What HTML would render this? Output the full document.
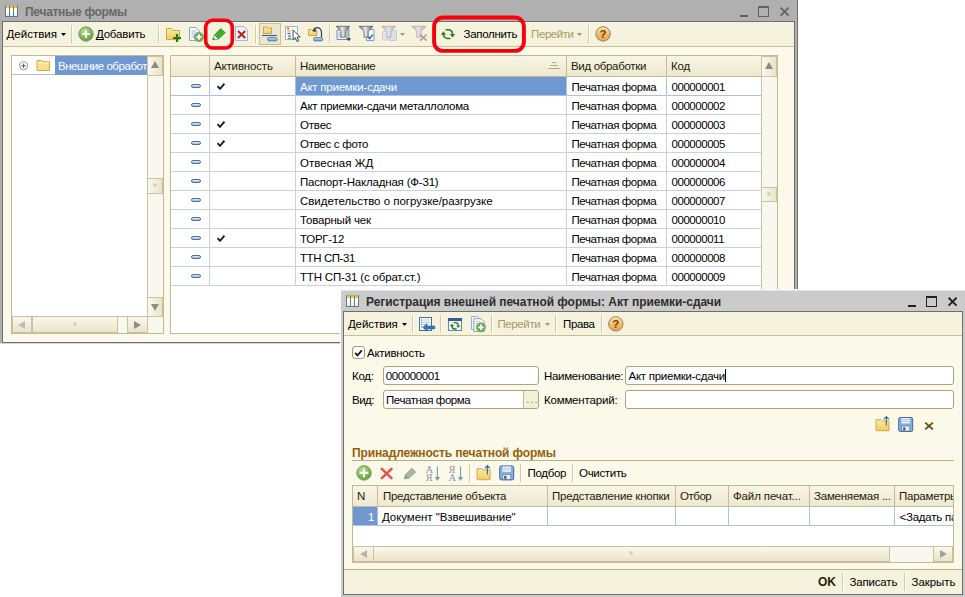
<!DOCTYPE html>
<html lang="ru"><head><meta charset="utf-8"><title>Печатные формы</title>
<style>
html,body{margin:0;padding:0;background:#fff;}
body{width:965px;height:597px;position:relative;overflow:hidden;font-family:"Liberation Sans",sans-serif;font-size:11.5px;line-height:13px;color:#000;}
div,span,i,svg{position:absolute;box-sizing:border-box;white-space:nowrap;}
.t{line-height:13px;}
.b{font-weight:bold;font-size:12px;}
/* windows */
#w1{left:0;top:0;width:798px;height:344px;background:linear-gradient(#b0b0b0,#b0b0b0) 0 0/797px 343px no-repeat,linear-gradient(#6e6e6e,#6e6e6e) 797px 0/1px 343px no-repeat,linear-gradient(#d6d6d6,#d6d6d6) 0 343px/798px 1px no-repeat;}
#w1 .in{left:2px;top:21px;width:793px;height:322px;background:#fbf9ea;border:1px solid #6e6e6e;}
#w1 .tb{left:3px;top:22px;width:791px;height:25px;background:#f5f2dd;border-bottom:1px solid #c8bf97;}
#w2{left:341px;top:290px;width:624px;height:307px;background:#cbcbcb;box-shadow:-1px -1px 0 0 #fff, inset 0 1px 0 0 #e2e2e2;}
#w2 .in{left:2px;top:21px;width:620px;height:284px;background:#fbf9ea;border:1px solid #6e6e6e;}
#w2 .tb{left:3px;top:22px;width:618px;height:24px;background:#f5f2dd;border-bottom:1px solid #c8bf97;}
#w2 .bb{left:3px;top:279px;width:618px;height:25px;background:#f5f2dd;border-top:1px solid #b9af86;}
.sep{width:2px;height:18px;border-left:1px solid #d3cba8;border-right:1px solid #fffef6;}
.dis{color:#ab9a64;}
.arr{width:5px;height:3px;background:#000;clip-path:polygon(0 0,100% 0,50% 100%);}
.arr.dis{background:#a8975a;}
/* panels */
.panel{background:#fff;border:1px solid #c3ba92;}
.hdr{background:linear-gradient(#f8f5e6,#ede8cf);border-bottom:1px solid #c6bc92;}
.hc{top:0;height:20px;border-right:1px solid #c6bc92;padding:4px 0 0 4px;color:#241c08;overflow:hidden;}
.row{left:0;width:590px;height:19px;border-bottom:1px solid #c9d1db;}
.row.cur{border-bottom-color:#a9c1e8;}
.row span{top:0;height:18px;padding:4px 0 0 4px;overflow:hidden;}
.row .c3{left:125px;width:270px;}
.row .c4{left:396px;width:99px;padding-left:4.5px;}
.row .c5{left:496px;width:94px;padding-left:4.5px;}
.row .sel{background:#6f98d2;color:#fff;}
.dash{left:20px;top:7px;width:10px;height:4px;border:1px solid #4f7096;border-radius:2px;background:linear-gradient(#e4edf6,#9dbbdc);}
.chk{left:46px;top:6px;width:8px;height:7px;}
.vl{top:21px;width:1px;background:#c9d1db;}
/* scrollbars */
.sb{background:#f9f8f0;}
.sbtn{background:linear-gradient(90deg,#faf8ec,#e9e4c8);border:1px solid #cbc39d;}
.sbtnh{background:linear-gradient(#faf8ec,#e9e4c8);border:1px solid #cbc39d;}
.tri{width:0;height:0;}
.inp{background:#fff;border:1px solid #aca37a;border-radius:3px;}
u{text-decoration:underline;text-decoration-thickness:1px;text-underline-offset:1px;text-decoration-skip-ink:none;}

</style></head>
<body>
<div id="w1">
 <div class="in"></div>
 <div class="tb"></div>
 <!-- title -->
 <svg style="left:5px;top:5px;width:13px;height:12px" viewBox="0 0 13 12"><rect x="0.5" y="0.5" width="12" height="11" fill="#fff" stroke="#647789"/><rect x="1" y="1" width="11" height="2" fill="#f5c51c"/><rect x="1" y="8" width="11" height="3" fill="#e6f3fb"/><path d="M4.5 1V11M8.5 1V11" stroke="#647789"/><path d="M0.5 0.5H12.5" stroke="#97abc2"/></svg>
 <span class="t b" id="t1" style="left:25px;top:6px;color:#676767;letter-spacing:-0.28px">Печатные формы</span>
 <svg style="left:736px;top:2px;width:58px;height:18px" viewBox="736 2 58 18"><rect x="740" y="15" width="8" height="2" fill="#626262"/><rect x="758" y="6" width="11" height="2" fill="#626262"/><rect x="758.5" y="7.5" width="10" height="9" fill="none" stroke="#626262"/><path d="M780.6 7.6L788.6 15.6M788.6 7.6L780.6 15.6" stroke="#626262" stroke-width="1.7"/></svg>
 <!-- toolbar -->
 <span class="t" id="t2" style="left:6.5px;top:28px;letter-spacing:0.014px">Действия</span><i class="arr" style="left:61px;top:33px"></i>
 <i class="sep" style="left:71px;top:25px"></i>
 <svg style="left:78px;top:26px;width:16px;height:16px" viewBox="0 0 16 16"><defs><radialGradient id="gp" cx="0.4" cy="0.3" r="0.8"><stop offset="0" stop-color="#b8e08c"/><stop offset="1" stop-color="#4f9b2a"/></radialGradient></defs><circle cx="8" cy="8" r="7.2" fill="url(#gp)" stroke="#86937c" stroke-width="1"/><path d="M8 4V12M4 8H12" stroke="#fff" stroke-width="2"/></svg>
 <span class="t" id="t3" style="left:95.9px;top:28px;letter-spacing:-0.179px"><u>Д</u>обавить</span>
 <i class="sep" style="left:158px;top:25px"></i>
 <!-- toolbar icons (page coordinates) -->
 <i class="sep" style="left:255px;top:25px"></i>
 <div style="left:259px;top:23px;width:22px;height:22px;border:1px solid #c9bf95;background:#ece7cc"></div>
 <i class="sep" style="left:329px;top:25px"></i>
 <i class="arr dis" style="left:400px;top:33px"></i>
 <svg style="left:0;top:0;width:798px;height:60px" viewBox="0 0 798 60">
  <defs>
   <linearGradient id="fold" x1="0" y1="0" x2="0" y2="1"><stop offset="0" stop-color="#fbe9a6"/><stop offset="1" stop-color="#f1cd62"/></linearGradient>
   <linearGradient id="fun" x1="0" y1="0" x2="1" y2="0"><stop offset="0" stop-color="#6a6e72"/><stop offset="0.45" stop-color="#e8eaec"/><stop offset="1" stop-color="#5a5e62"/></linearGradient>
   <linearGradient id="fund" x1="0" y1="0" x2="1" y2="0"><stop offset="0" stop-color="#b4b4b4"/><stop offset="0.45" stop-color="#e4e4e4"/><stop offset="1" stop-color="#aeaeae"/></linearGradient>
   <linearGradient id="pill" x1="0" y1="0" x2="0" y2="1"><stop offset="0" stop-color="#c9dcef"/><stop offset="1" stop-color="#6f97c4"/></linearGradient>
  </defs>
  <!-- folder plus 166..181 x 27..42 -->
  <path d="M166.5 28.5H171.5L173 30.5H179.5V39.5H166.5Z" fill="url(#fold)" stroke="#cfa646"/>
  <path d="M177 34V42M173 38H181" stroke="#1f7d12" stroke-width="2.2"/>
  <!-- doc plus 189..204 -->
  <path d="M189.5 27.5H196L199.5 31V40.5H189.5Z" fill="#f3f7fb" stroke="#8ea6c0"/>
  <path d="M191.5 31H196M191.5 33H197.5M191.5 35H195M191.5 37H194" stroke="#a8bcd2" stroke-width="0.9"/>
  <circle cx="199" cy="37" r="4.6" fill="#6cb04a" stroke="#8aa382" stroke-width="1"/>
  <path d="M199 34.2V39.8M196.2 37H201.8" stroke="#fff" stroke-width="1.7"/>
  <!-- pencil 212..225 x 28..40 -->
  <path d="M212.8 39.8L214.3 35.3L220.8 28.6L225.2 32.8L218.2 39.2Z" fill="#35a31f" stroke="#2a8417" stroke-width="0.7"/>
  <path d="M215.8 36.2L221.8 30.2M217.6 38L224 31.8" stroke="#6fca58" stroke-width="0.8"/>
  <path d="M212.8 39.8L214.3 35.3L218.2 39.2Z" fill="#eef6ea"/>
  <path d="M212.8 39.8L213.5 37.7L215 39.2Z" fill="#2a2a2a"/>
  <!-- doc x 235..248 x 26..41 -->
  <path d="M235.5 26.5H244L247.5 30V40.5H235.5Z" fill="#e9f1fa" stroke="#a3b9d2"/>
  <path d="M238 31L245.2 38M245.2 31L238 38" stroke="#b52420" stroke-width="2"/>
  <!-- hierarchy (pressed) -->
  <path d="M263.5 27H266.5L267.5 28H271.5V33.5H263.5Z" fill="url(#fold)" stroke="#cfa646"/>
  <path d="M262 35.5H277" stroke="#2f5f98" stroke-width="1.1"/>
  <rect x="267.5" y="37.5" width="9.5" height="3.4" rx="1.5" fill="url(#pill)" stroke="#4f7db2" stroke-width="0.9"/>
  <!-- list + cursor 285..300 -->
  <rect x="285.5" y="26.5" width="12" height="13" fill="#fbfdff" stroke="#9db2ca"/>
  <path d="M287 28.5H289" stroke="#e03020" stroke-width="1.4"/><path d="M287.5 31H290.5" stroke="#e8b020" stroke-width="1.4"/><path d="M287.5 33.5H290.5" stroke="#a05a20" stroke-width="1.4"/><path d="M288 36H291" stroke="#30a0d8" stroke-width="1.4"/><path d="M288 38.3H291" stroke="#40a030" stroke-width="1.2"/>
  <path d="M293 29.8V39.6L295.3 37.6L297 41.6L298.8 40.8L297.1 37H300.2Z" fill="#fff" stroke="#3a3a3a" stroke-width="0.9"/>
  <!-- folder arc 308..323 -->
  <path d="M308.5 29.5H311.5L312.5 30.5H317V35.5H308.5Z" fill="url(#fold)" stroke="#cfa646"/>
  <path d="M313.5 29.6C316 26.5 321.5 27 321.5 33V37.5" fill="none" stroke="#2c4058" stroke-width="1.2"/>
  <path d="M311.8 30.8L315.8 28.2L315.6 32.2Z" fill="#2c4058"/>
  <rect x="313.5" y="37.5" width="9.2" height="3.4" rx="1.5" fill="url(#pill)" stroke="#4f7db2" stroke-width="0.9"/>
  <!-- filter 1 336..350 -->
  <path d="M337 30H347V39.5H337Z" fill="#f1f6fb" stroke="#5f84b0" stroke-width="0.9"/>
  <path d="M338.5 33H341M338.5 35H341M338.5 37H341" stroke="#7f9fc4" stroke-width="0.8"/>
  <path d="M336.3 26.3H349.7L345.4 31.4V37.2H341V31.4Z" fill="url(#fun)" stroke="#50565c" stroke-width="0.7"/>
  <path d="M348.8 28.5V40" stroke="#26384e" stroke-width="1" stroke-dasharray="1.2 0.8"/>
  <path d="M346.5 38.3H351L348.8 41.3Z" fill="#26384e"/>
  <!-- filter 2 359..374 -->
  <path d="M366.5 29.5H374V40.5H366.5Z" fill="#f1f6fb" stroke="#6c97c8" stroke-width="0.9"/>
  <path d="M359 26.3H373L368.2 31.4V37.2H364V31.4Z" fill="url(#fun)" stroke="#50565c" stroke-width="0.7"/>
  <path d="M367.8 36.6L369.6 38.6L372.8 34.6" fill="none" stroke="#2a62b4" stroke-width="1.5"/>
  <!-- filter 3 disabled 382..396 -->
  <path d="M382.5 31.5H388V40H382.5Z" fill="#e3e6e6" stroke="#c4c8c8" stroke-width="0.8"/>
  <path d="M389.5 30.5H396.5V40.5H389.5Z" fill="#d9e0e6" stroke="#b9c4cf" stroke-width="0.8"/>
  <path d="M381.8 26.3H395.8L391 31.4V37.2H386.6V31.4Z" fill="url(#fund)" stroke="#a9a9a9" stroke-width="0.7"/>
  <!-- filter 4 disabled 412..427 -->
  <path d="M411.9 26.3H425.9L421 31.4V37.2H416.8V31.4Z" fill="url(#fund)" stroke="#a9a9a9" stroke-width="0.7"/>
  <path d="M420.2 34.5L426.6 40.6M426.6 34.5L420.2 40.6" stroke="#b59c9c" stroke-width="1.7"/>
 </svg>
 <svg style="left:203px;top:17px;width:32px;height:34px" viewBox="0 0 32 34"><rect x="2.7" y="3.2" width="26.6" height="27.8" rx="7" fill="none" stroke="#f4000e" stroke-width="3.6"/></svg>
 <!-- fill -->
 <svg style="left:436px;top:24px;width:24px;height:20px" viewBox="436 24 24 20"><path d="M445.6 29.7H448.3A4.1 4.1 0 0 1 452.5 33.8V34.5" fill="none" stroke="#2a7c14" stroke-width="1.5"/><path d="M449.9 34.1H455.1L452.5 37.5Z" fill="#2a7c14"/><path d="M450.4 38.4H447.6A4.1 4.1 0 0 1 443.4 34.3V34" fill="none" stroke="#2a7c14" stroke-width="1.5"/><path d="M440.9 34.7H446L443.4 31.2Z" fill="#2a7c14"/></svg>
 <span class="t" id="t4" style="left:463.5px;top:28px;letter-spacing:-0.297px">Заполнить</span>
 <svg style="left:431px;top:14px;width:96px;height:40px" viewBox="0 0 96 40"><rect x="3.1" y="3.5" width="89.8" height="33.4" rx="9" fill="none" stroke="#f8000a" stroke-width="3.9"/></svg>
 <span class="t dis" id="t5" style="left:531.1px;top:28px;letter-spacing:-0.44px">Перейти</span><i class="arr dis" style="left:577px;top:33px"></i>
 <i class="sep" style="left:588px;top:25px"></i>
 <svg style="left:595px;top:26px;width:17px;height:17px" viewBox="0 0 17 17"><defs><linearGradient id="gh" x1="0" y1="0" x2="0" y2="1"><stop offset="0" stop-color="#fde4a8"/><stop offset="0.55" stop-color="#f3bb62"/><stop offset="1" stop-color="#e9a545"/></linearGradient></defs><circle cx="8.1" cy="7.9" r="7.2" fill="url(#gh)" stroke="#8d8370" stroke-width="1"/><text x="8.1" y="12" font-family="Liberation Sans,sans-serif" font-weight="bold" font-size="11.5" text-anchor="middle" fill="#6e4410">?</text></svg>

 <!-- tree panel -->
 <div class="panel" style="left:11px;top:55px;width:153px;height:279px">
   <svg style="left:7px;top:5px;width:10px;height:10px" viewBox="0 0 10 10"><circle cx="4.6" cy="4.8" r="4" fill="#fff" stroke="#7c7c7c" stroke-width="0.8"/><path d="M2.4 4.8H6.8M4.6 2.6V7" stroke="#444" stroke-width="0.9"/></svg>
   <i style="left:0;top:18px;width:43px;height:1px;background:#a9c1e8"></i>
   <svg style="left:24px;top:3px;width:15px;height:13px" viewBox="0 0 15 13"><path d="M1 1.5H5.5L6.5 2.7H13.5V11.5H1Z" fill="#f8de8e" stroke="#d0a848"/><path d="M1.8 4H13" stroke="#fff3c4"/></svg>
   <div style="left:43px;top:0;width:92px;height:19px;background:#6f98d2;overflow:hidden"><span class="t" id="t6" style="left:3px;top:4px;color:#fff;letter-spacing:-0.45px">Внешние обработки</span></div>
   <!-- v scroll -->
   <div class="sb" style="left:135px;top:0;width:16px;height:261px;border-left:1px solid #cbc39d"></div>
   <div class="sbtn" style="left:135px;top:0;width:16px;height:20px"></div>
   <i class="tri" style="left:139px;top:5px;border-left:4px solid transparent;border-right:4px solid transparent;border-bottom:7px solid #8a8a8a"></i>
   <div class="sbtn" style="left:135px;top:122px;width:16px;height:16px"></div><i style="left:141px;top:127px;width:4px;height:4px;border-radius:2px;background:#d9d4bd"></i>
   <div class="sbtn" style="left:135px;top:241px;width:16px;height:20px"></div>
   <i class="tri" style="left:139px;top:248px;border-left:4px solid transparent;border-right:4px solid transparent;border-top:7px solid #8c8c8c"></i>
   <!-- h scroll -->
   <div class="sb" style="left:0;top:260px;width:151px;height:17px;border-top:1px solid #cbc39d"></div>
   <div class="sbtnh" style="left:0;top:260px;width:20px;height:17px"></div>
   <i class="tri" style="left:6px;top:265px;border-top:4px solid transparent;border-bottom:4px solid transparent;border-right:7px solid #bdbdb8"></i>
   <div class="sbtnh" style="left:20px;top:260px;width:86px;height:17px"></div><i style="left:61px;top:266px;width:4px;height:4px;border-radius:2px;background:#d9d4bd"></i>
   <div class="sbtnh" style="left:115px;top:260px;width:21px;height:17px"></div>
   <i class="tri" style="left:122px;top:265px;border-top:4px solid transparent;border-bottom:4px solid transparent;border-left:7px solid #8c8c8c"></i>
 </div>

 <!-- table panel -->
 <div class="panel" style="left:170px;top:55px;width:608px;height:279px;overflow:hidden">
   <div class="hdr" style="left:0;top:0;width:590px;height:21px">
     <span class="hc" style="left:0;width:39px"></span>
     <span class="hc" id="h1" style="left:39px;width:86px;letter-spacing:-0.159px">Активность</span>
     <span class="hc" id="h2" style="left:125px;width:271px;letter-spacing:-0.361px">Наименование</span>
     <span class="hc" id="h3" style="left:396px;width:100px;letter-spacing:-0.326px">Вид обработки</span>
     <span class="hc" id="h4" style="left:496px;width:94px;border-right:0;letter-spacing:-0.154px">Код</span>
     <svg style="left:377px;top:5px;width:12px;height:9px" viewBox="0 0 12 9"><path d="M4 1.5H8M2 4.5H10M0 7.5H12" stroke="#b9ad7a" stroke-width="1.2"/></svg>
   </div>
   <div style="left:0;top:0;width:607px;height:277px">
   <div class="row cur" style="top:21px"><i class="dash"></i><svg class="chk" viewBox="0 0 8 7"><path d="M0.6 3.2 L3 5.8 L7.4 0.7" fill="none" stroke="#1c1c1c" stroke-width="1.8"/></svg><span class="c3 sel" id="r0" style="letter-spacing:-0.233px">Акт приемки-сдачи</span><span class="c4" style="letter-spacing:-0.4px">Печатная форма</span><span class="c5" style="letter-spacing:-0.451px">000000001</span></div>
<div class="row" style="top:40px"><i class="dash"></i><span class="c3" id="r1" style="letter-spacing:-0.27px">Акт приемки-сдачи металлолома</span><span class="c4" style="letter-spacing:-0.4px">Печатная форма</span><span class="c5" style="letter-spacing:-0.451px">000000002</span></div>
<div class="row" style="top:59px"><i class="dash"></i><svg class="chk" viewBox="0 0 8 7"><path d="M0.6 3.2 L3 5.8 L7.4 0.7" fill="none" stroke="#1c1c1c" stroke-width="1.8"/></svg><span class="c3" id="r2" style="letter-spacing:-0.189px">Отвес</span><span class="c4" style="letter-spacing:-0.4px">Печатная форма</span><span class="c5" style="letter-spacing:-0.451px">000000003</span></div>
<div class="row" style="top:78px"><i class="dash"></i><svg class="chk" viewBox="0 0 8 7"><path d="M0.6 3.2 L3 5.8 L7.4 0.7" fill="none" stroke="#1c1c1c" stroke-width="1.8"/></svg><span class="c3" id="r3" style="letter-spacing:-0.285px">Отвес с фото</span><span class="c4" style="letter-spacing:-0.4px">Печатная форма</span><span class="c5" style="letter-spacing:-0.451px">000000005</span></div>
<div class="row" style="top:97px"><i class="dash"></i><span class="c3" id="r4" style="letter-spacing:0.025px">Отвесная ЖД</span><span class="c4" style="letter-spacing:-0.4px">Печатная форма</span><span class="c5" style="letter-spacing:-0.451px">000000004</span></div>
<div class="row" style="top:116px"><i class="dash"></i><span class="c3" id="r5" style="letter-spacing:-0.194px">Паспорт-Накладная (Ф-31)</span><span class="c4" style="letter-spacing:-0.4px">Печатная форма</span><span class="c5" style="letter-spacing:-0.451px">000000006</span></div>
<div class="row" style="top:135px"><i class="dash"></i><span class="c3" id="r6" style="letter-spacing:-0.025px">Свидетельство о погрузке/разгрузке</span><span class="c4" style="letter-spacing:-0.4px">Печатная форма</span><span class="c5" style="letter-spacing:-0.451px">000000007</span></div>
<div class="row" style="top:154px"><i class="dash"></i><span class="c3" id="r7" style="letter-spacing:-0.179px">Товарный чек</span><span class="c4" style="letter-spacing:-0.4px">Печатная форма</span><span class="c5" style="letter-spacing:-0.451px">000000010</span></div>
<div class="row" style="top:173px"><i class="dash"></i><svg class="chk" viewBox="0 0 8 7"><path d="M0.6 3.2 L3 5.8 L7.4 0.7" fill="none" stroke="#1c1c1c" stroke-width="1.8"/></svg><span class="c3" id="r8" style="letter-spacing:-0.283px">ТОРГ-12</span><span class="c4" style="letter-spacing:-0.4px">Печатная форма</span><span class="c5" style="letter-spacing:-0.451px">000000011</span></div>
<div class="row" style="top:192px"><i class="dash"></i><span class="c3" id="r9" style="letter-spacing:-0.417px">ТТН СП-31</span><span class="c4" style="letter-spacing:-0.4px">Печатная форма</span><span class="c5" style="letter-spacing:-0.451px">000000008</span></div>
<div class="row" style="top:211px"><i class="dash"></i><span class="c3" id="r10" style="letter-spacing:-0.169px">ТТН СП-31 (с обрат.ст.)</span><span class="c4" style="letter-spacing:-0.4px">Печатная форма</span><span class="c5" style="letter-spacing:-0.451px">000000009</span></div>
   </div>
   <i class="vl" style="left:38px;height:209px"></i><i class="vl" style="left:124px;height:209px"></i><i class="vl" style="left:395px;height:209px"></i><i class="vl" style="left:495px;height:209px"></i><i class="vl" style="left:38px;height:18px;background:#a9c1e8"></i><i class="vl" style="left:124px;height:18px;background:#a9c1e8"></i><i class="vl" style="left:395px;height:18px;background:#a9c1e8"></i><i class="vl" style="left:495px;height:18px;background:#a9c1e8"></i>
   <!-- v scroll -->
   <div class="sb" style="left:590px;top:0;width:16px;height:277px;border-left:1px solid #cbc39d"></div>
   <div class="sbtn" style="left:590px;top:0;width:16px;height:21px"></div>
   <i class="tri" style="left:594px;top:6px;border-left:4px solid transparent;border-right:4px solid transparent;border-bottom:7px solid #8a8a8a"></i>
   <div class="sbtn" style="left:590px;top:131px;width:16px;height:15px"></div><i style="left:596px;top:136px;width:4px;height:4px;border-radius:2px;background:#d9d4bd"></i>
 </div>
</div>

<div id="w2">
 <div class="in"></div>
 <div class="tb"></div>
 <div class="bb"></div>
</div>
<!-- window 2 content in page coordinates -->
<svg style="left:346px;top:295px;width:13px;height:12px" viewBox="0 0 13 12"><rect x="0.5" y="0.5" width="12" height="11" fill="#fff" stroke="#647789"/><rect x="1" y="1" width="11" height="2" fill="#f5c51c"/><rect x="1" y="8" width="11" height="3" fill="#e6f3fb"/><path d="M4.5 1V11M8.5 1V11" stroke="#647789"/><path d="M0.5 0.5H12.5" stroke="#97abc2"/></svg>
<span class="t b" id="u1" style="left:366px;top:296px;letter-spacing:-0.05px;color:#2e2e2e">Регистрация внешней печатной формы: Акт приемки-сдачи</span>
<svg style="left:904px;top:292px;width:58px;height:18px" viewBox="904 292 58 18"><rect x="908" y="305" width="8" height="2" fill="#222"/><rect x="926" y="296" width="11" height="2" fill="#222"/><rect x="926.5" y="297.5" width="10" height="9" fill="none" stroke="#222"/><path d="M948.6 297.8L956.6 305.6M956.6 297.8L948.6 305.6" stroke="#222" stroke-width="1.9"/></svg>
<!-- toolbar -->
<span class="t" id="u2" style="left:347.9px;top:318px;letter-spacing:-0.061px">Действия</span><i class="arr" style="left:402px;top:323px"></i>
<i class="sep" style="left:412px;top:315px"></i>
<i class="sep" style="left:440px;top:315px"></i>
<i class="sep" style="left:491px;top:315px"></i>
<span class="t dis" id="u3" style="left:497.5px;top:318px;letter-spacing:-0.397px">Перейти</span><i class="arr dis" style="left:545px;top:323px"></i>
<i class="sep" style="left:555px;top:315px"></i>
<span class="t" id="u4" style="left:563.0px;top:318px;letter-spacing:-0.367px">Права</span>
<i class="sep" style="left:601px;top:315px"></i>
<svg style="left:608px;top:316px;width:17px;height:17px" viewBox="0 0 17 17"><circle cx="7.8" cy="7.9" r="7.2" fill="url(#gh)" stroke="#8d8370" stroke-width="1"/><text x="7.8" y="12" font-family="Liberation Sans,sans-serif" font-weight="bold" font-size="11.5" text-anchor="middle" fill="#6e4410">?</text></svg>
<svg style="left:341px;top:312px;width:300px;height:24px" viewBox="341 312 300 24">
 <!-- icon1 doc + arrow -->
 <rect x="419.5" y="317.5" width="12" height="13" fill="#f6f9fd" stroke="#4a6f9f"/>
 <path d="M421 320H422.5M421 322.3H422.5M421 324.6H422.5M421 326.9H422.5" stroke="#3f74b8" stroke-width="1"/>
 <path d="M423.5 320H430M423.5 322.3H430M423.5 324.6H428" stroke="#b5c4d6" stroke-width="0.9"/>
 <path d="M434.8 325.9H427V323.6L422.8 327.4L427 331.2V328.9H434.8Z" fill="#2f78b8" stroke="#25609a" stroke-width="0.5"/>
 <!-- icon2 window refresh -->
 <rect x="448.5" y="318.5" width="13" height="12" fill="#f4f8fc" stroke="#5f86b6"/>
 <rect x="448.5" y="318.5" width="13" height="2" fill="#2f5f98" stroke="#2f5f98"/>
 <path d="M453.6 322.6H455.4A2.8 2.8 0 0 1 458.2 325.4V325.6" fill="none" stroke="#2a7c14" stroke-width="1.3"/><path d="M456.2 325.4H460.3L458.2 328Z" fill="#2a7c14"/>
 <path d="M456.6 329H454.8A2.8 2.8 0 0 1 452 326.2V326" fill="none" stroke="#2a7c14" stroke-width="1.3"/><path d="M449.9 326.2H454L452 323.6Z" fill="#2a7c14"/>
 <!-- icon3 docs plus -->
 <path d="M471.5 316.5H477.5L480 319V329.5H471.5Z" fill="#f1f5fa" stroke="#9fb2c8"/>
 <path d="M473.8 318.7H481L484.3 322V331.5H473.8Z" fill="#f6f9fc" stroke="#8ea6c0"/>
 <path d="M475.5 321.5H480M475.5 323.5H479" stroke="#b5c4d6" stroke-width="0.8"/>
 <circle cx="480.9" cy="327.3" r="4.5" fill="#6cb04a" stroke="#8aa382" stroke-width="1"/>
 <path d="M480.9 324.5V330.1M478.1 327.3H483.7" stroke="#fff" stroke-width="1.7"/>
</svg>
<!-- form -->
<div style="left:352px;top:346px;width:13px;height:13px;background:#fff;border:1px solid #a0976c;border-radius:3px"></div>
<svg style="left:354px;top:349px;width:9px;height:8px" viewBox="0 0 9 8"><path d="M1.2 3.8 L3.5 6.3 L7.8 1.3" fill="none" stroke="#1a1a1a" stroke-width="1.8"/></svg>
<span class="t" id="u5" style="left:367.0px;top:347px;letter-spacing:-0.269px">Активность</span>
<span class="t" id="u6" style="left:352.0px;top:370px;letter-spacing:-0.263px">Код:</span>
<div class="inp" style="left:383px;top:366px;width:156px;height:19px"></div>
<span class="t" id="u7" style="left:385.8px;top:370px;letter-spacing:-0.407px">000000001</span>
<span class="t" id="u8" style="left:543.9px;top:370px;letter-spacing:-0.279px">Наименование:</span>
<div class="inp" style="left:625px;top:366px;width:329px;height:19px"></div>
<span class="t" id="u9" style="left:628.5px;top:370px;letter-spacing:-0.262px">Акт приемки-сдачи</span><i style="left:725px;top:369px;width:1px;height:13px;background:#000"></i>
<span class="t" id="u10" style="left:352.0px;top:394px;letter-spacing:-0.5px">Вид:</span>
<div class="inp" style="left:383px;top:390px;width:156px;height:19px"></div>
<div style="left:523px;top:391px;width:15px;height:17px;background:#f3f0da;border-left:1px solid #c2b98e;border-radius:0 2px 2px 0"></div>
<span class="t" style="left:526px;top:393px;color:#8f875e;letter-spacing:1px">...</span>
<span class="t" id="u11" style="left:386.0px;top:394px;letter-spacing:-0.443px">Печатная форма</span>
<span class="t" id="u12" style="left:543.9px;top:394px;letter-spacing:-0.17px">Комментарий:</span>
<div class="inp" style="left:625px;top:390px;width:329px;height:19px"></div>
<!-- small icons -->
<svg style="left:870px;top:412px;width:70px;height:24px" viewBox="870 412 70 24">
<g transform="translate(874.5 416)"><path d="M1.5 3.7H6.3L7.8 5.2H14.5V14.7H1.5Z" fill="url(#fold)" stroke="#d3a94a"/><path d="M11.8 9.5V1" stroke="#34688c" stroke-width="1.1"/><path d="M9.3 3.4L11.8 0.6L14.3 3.4" fill="none" stroke="#34688c" stroke-width="1.1"/></g>
<g transform="translate(898.2 417)"><rect x="0.5" y="0.5" width="14" height="14" rx="1.6" fill="#8aadd8" stroke="#46699c"/><rect x="3.3" y="1" width="8.4" height="5.4" fill="#eef4fb"/><path d="M3.3 2.6H11.7M3.3 4.4H11.7" stroke="#a9c6e6" stroke-width="0.9"/><rect x="3.6" y="9" width="8" height="5" fill="#eeeeee" stroke="#426fa6" stroke-width="0.6"/><rect x="5" y="10.4" width="2.2" height="3" fill="#38507a"/></g>
<path d="M925.2 422.6L932.8 429.4M932.8 422.6L925.2 429.4" stroke="#6a4d00" stroke-width="1.9"/>
</svg>
<!-- section -->
<span class="t b" id="u13" style="left:352px;top:447px;color:#95600a;letter-spacing:-0.12px">Принадлежность печатной формы</span>
<i style="left:352px;top:460px;width:602px;height:1px;background:#b9af86"></i>
<!-- section toolbar -->
<svg style="left:352px;top:462px;width:180px;height:22px" viewBox="352 462 180 22">
 <circle cx="364" cy="472.9" r="7.3" fill="url(#gp)" stroke="#8a9c80" stroke-width="1"/>
 <path d="M364 468.6V477.2M359.7 472.9H368.3" stroke="#fff" stroke-width="2.1"/>
 <path d="M381.8 468.8L391.5 478.2M391.5 468.8L381.8 478.2" stroke="#e3514a" stroke-width="2.5" stroke-linecap="round"/>
 <path d="M404.1 478.9L405.4 474.6L411.6 468L415.9 472.1L409.2 478.3Z" fill="#a9b59f" stroke="#9aa890" stroke-width="0.6"/>
 <path d="M404.1 478.9L405.4 474.6L409.2 478.3Z" fill="#93a58c"/>
 <text x="425.6" y="472.7" font-family="Liberation Serif,serif" font-size="10.5" fill="#7b98b8">A</text>
 <text x="425.8" y="480.8" font-family="Liberation Serif,serif" font-size="10" fill="#a08898">Я</text>
 <path d="M437.4 466.5V479.5" stroke="#7b98b8" stroke-width="1.1"/><path d="M434.8 477H440L437.4 481Z" fill="#7b98b8"/>
 <text x="448.8" y="472.9" font-family="Liberation Serif,serif" font-size="10" fill="#a08898">Я</text>
 <text x="448.6" y="480.8" font-family="Liberation Serif,serif" font-size="10.5" fill="#7b98b8">A</text>
 <path d="M460.5 466.5V479.5" stroke="#7b98b8" stroke-width="1.1"/><path d="M457.9 477H463.1L460.5 481Z" fill="#7b98b8"/>
 <g transform="translate(475.6 465)"><path d="M1.5 3.7H6.3L7.8 5.2H14.5V14.7H1.5Z" fill="url(#fold)" stroke="#d3a94a"/><path d="M11.8 9.5V1" stroke="#34688c" stroke-width="1.1"/><path d="M9.3 3.4L11.8 0.6L14.3 3.4" fill="none" stroke="#34688c" stroke-width="1.1"/></g>
 <g transform="translate(499.2 465.4)"><rect x="0.5" y="0.5" width="14" height="14" rx="1.6" fill="#8aadd8" stroke="#46699c"/><rect x="3.3" y="1" width="8.4" height="5.4" fill="#eef4fb"/><path d="M3.3 2.6H11.7M3.3 4.4H11.7" stroke="#a9c6e6" stroke-width="0.9"/><rect x="3.6" y="9" width="8" height="5" fill="#eeeeee" stroke="#426fa6" stroke-width="0.6"/><rect x="5" y="10.4" width="2.2" height="3" fill="#38507a"/></g>
</svg>
<i class="sep" style="left:469px;top:464px"></i>
<i class="sep" style="left:520px;top:464px"></i>
<span class="t" id="u14" style="left:527.6px;top:467px;letter-spacing:-0.35px">Подбор</span>
<i class="sep" style="left:572px;top:464px"></i>
<span class="t" id="u15" style="left:579.1px;top:467px;letter-spacing:-0.333px">Очистить</span>
<!-- table 2 -->
<div class="panel" style="left:352px;top:485px;width:602px;height:78px;overflow:hidden">
  <div class="hdr" style="left:0;top:0;width:600px;height:21px">
    <span class="hc" id="g1" style="left:0;width:25px;letter-spacing:-0.245px">N</span>
    <span class="hc" id="g2" style="left:25px;width:170px;padding-left:5px;letter-spacing:-0.276px">Представление объекта</span>
    <span class="hc" id="g3" style="left:195px;width:128px;letter-spacing:-0.199px">Представление кнопки</span>
    <span class="hc" id="g4" style="left:323px;width:53px;letter-spacing:-0.459px">Отбор</span>
    <span class="hc" id="g5" style="left:376px;width:81px;letter-spacing:-0.132px">Файл печат...</span>
    <span class="hc" id="g6" style="left:457px;width:85px;letter-spacing:-0.224px">Заменяемая ...</span>
    <span class="hc" id="g7" style="left:542px;width:58px;border-right:0;letter-spacing:-0.245px">Параметры</span>
  </div>
  <div style="left:0;top:21px;width:600px;height:19px;border-bottom:1px solid #a9c1e8"></div>
  <div style="left:0;top:21px;width:24px;height:18px;background:#6f98d2"></div>
  <span class="t" style="left:15px;top:25px;color:#fff">1</span>
  <span class="t" id="g8" style="left:29px;top:25px;letter-spacing:-0.063px">Документ "Взвешивание"</span>
  <span class="t" id="g9" style="left:546.5px;top:25px;letter-spacing:-0.245px">&lt;Задать параметры&gt;</span>
  <i class="vl" style="left:24px;height:18px;background:#a9c1e8"></i><i class="vl" style="left:194px;height:18px;background:#a9c1e8"></i><i class="vl" style="left:322px;height:18px;background:#a9c1e8"></i><i class="vl" style="left:375px;height:18px;background:#a9c1e8"></i><i class="vl" style="left:456px;height:18px;background:#a9c1e8"></i><i class="vl" style="left:541px;height:18px;background:#a9c1e8"></i>
  <!-- h scroll -->
  <div class="sb" style="left:0;top:60px;width:600px;height:16px;border-top:1px solid #cbc39d"></div>
  <div class="sbtnh" style="left:0;top:60px;width:21px;height:16px"></div>
  <i class="tri" style="left:7px;top:64px;border-top:4px solid transparent;border-bottom:4px solid transparent;border-right:7px solid #b5b5b5"></i>
  <div class="sbtnh" style="left:20px;top:60px;width:517px;height:16px"></div><i style="left:276px;top:65px;width:4px;height:4px;border-radius:2px;background:#d9d4bd"></i>
  <div class="sbtnh" style="left:580px;top:60px;width:20px;height:16px"></div>
  <i class="tri" style="left:587px;top:64px;border-top:4px solid transparent;border-bottom:4px solid transparent;border-left:7px solid #a2a2a2"></i>
</div>
<!-- bottom bar -->
<span class="t b" id="u16" style="left:818px;top:576px;color:#2b1d00">OK</span>
<i class="sep" style="left:842px;top:573px"></i>
<span class="t" id="u17" style="left:849.6px;top:576px;letter-spacing:-0.195px">Записать</span>
<i class="sep" style="left:904px;top:573px"></i>
<span class="t" id="u18" style="left:911.5px;top:576px;letter-spacing:-0.042px">Закрыть</span>

</body></html>
